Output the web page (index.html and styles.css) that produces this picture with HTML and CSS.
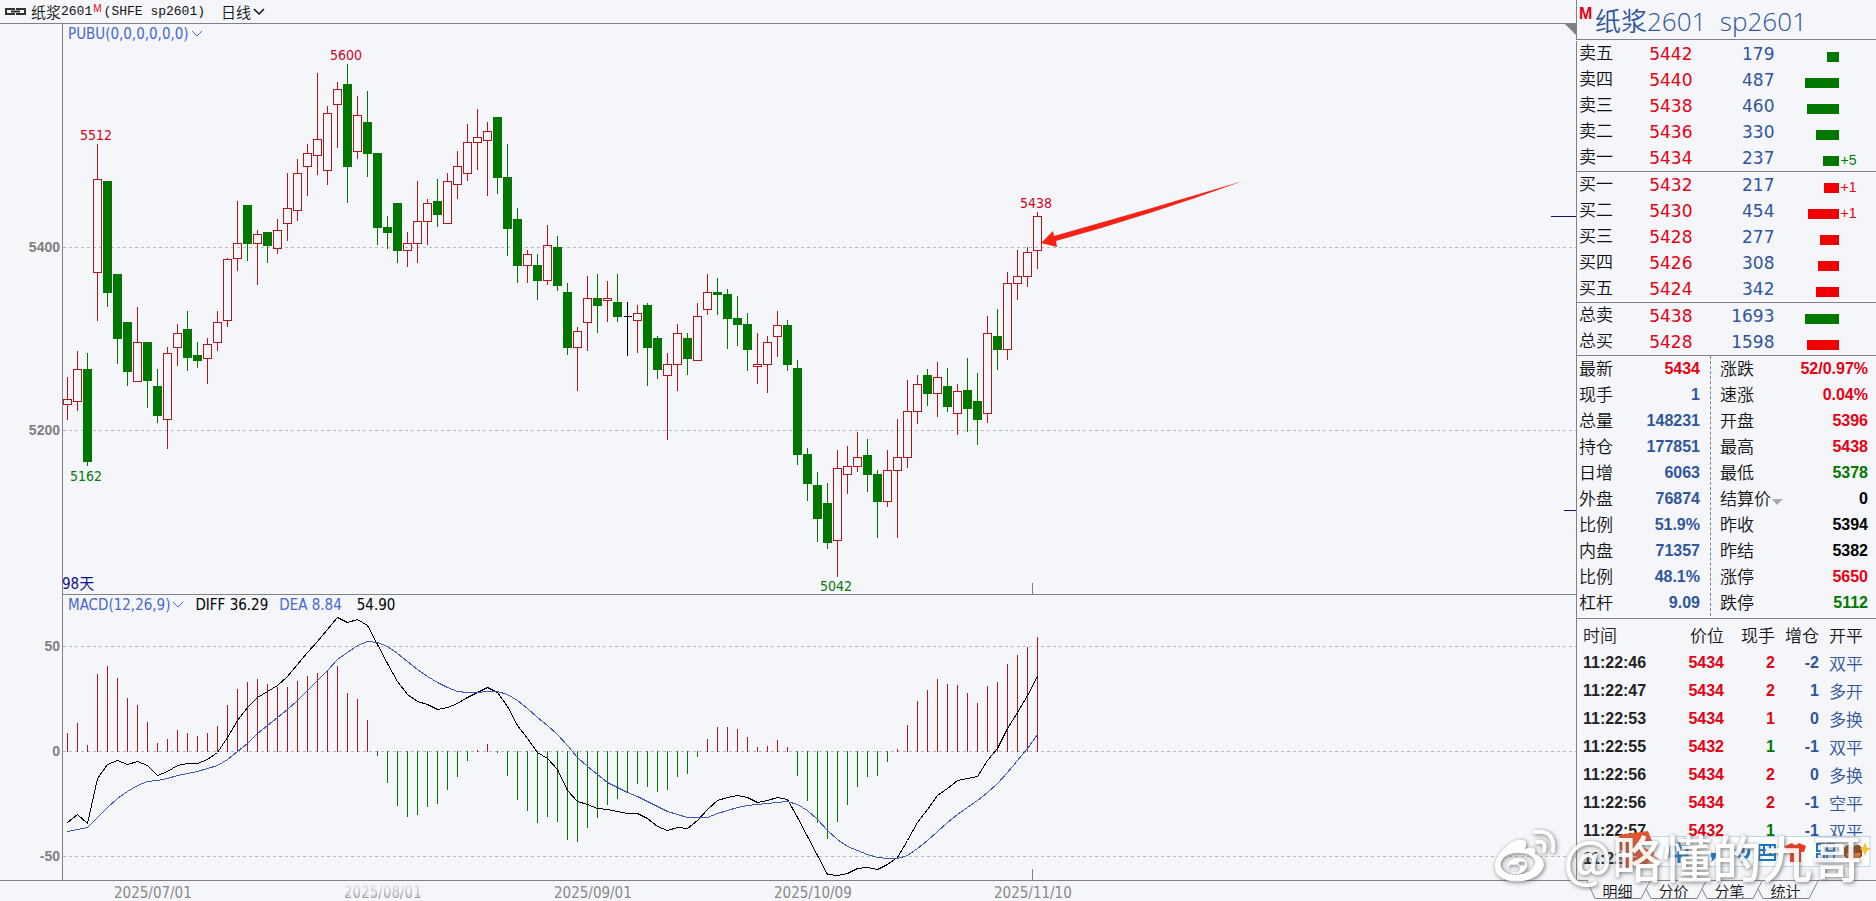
FILE: index.html
```html
<!DOCTYPE html>
<html lang="zh-CN">
<head>
<meta charset="utf-8">
<title>纸浆2601 日线</title>
<link rel="stylesheet" href="styles.css">
</head>
<body>
<div class="terminal">
  <main class="charts">
    <header class="toolbar">
      <svg class="link-icon" width="22" height="10" viewBox="0 0 22 10" aria-hidden="true"><path d="M9 3V2H1V7H9V6M12 3V2H20V7H12V6M6 4.500H15"/></svg>
      <h1 class="instrument">纸浆<span class="mono">2601</span><sup class="main-mark">M</sup><span class="mono">(SHFE sp2601)</span></h1>
      <button class="period" type="button">日线<svg class="chev" width="12" height="8" viewBox="0 0 12 8" aria-hidden="true"><path d="M1 1L6 6L11 1"/></svg></button>
    </header>
    <section class="pane" aria-label="K线">
      <div class="pane-head">
        <button class="indicator" type="button">PUBU(0,0,0,0,0,0)<svg class="chev" width="12" height="8" viewBox="0 0 12 8" aria-hidden="true"><path d="M1 1L6 6L11 1"/></svg></button>
      </div>
      <svg class="plot" id="price" viewBox="0 44 1576 551">
        <path class="grid" d="M63 247.500H1576M63 430.500H1576"/>
        <path class="frame" d="M62.500 44V594.500H1576M1032.500 583V594"/>
        <g id="candles"></g>
        <g class="axis"><text x="60" y="252">5400</text><text x="60" y="435">5200</text></g>
        <g class="peak up"><text x="96" y="140">5512</text><text x="346" y="60">5600</text><text x="1036" y="208">5438</text></g>
        <g class="peak down"><text x="86" y="481">5162</text><text x="836" y="591">5042</text></g>
        <text class="days" x="62" y="589">98天</text>
        <path class="level" d="M1551 216.500H1576M1564 510.500H1576"/>
        <path class="arrow" d="M1041 243L1053 231L1054 236Q1150 209 1243 181Q1150 215 1056 241L1057 247Z"/>
      </svg>
    </section>
    <section class="pane" aria-label="MACD">
      <div class="pane-head">
        <button class="indicator" type="button">MACD(12,26,9)<svg class="chev" width="12" height="8" viewBox="0 0 12 8" aria-hidden="true"><path d="M1 1L6 6L11 1"/></svg></button>
        <span>DIFF 36.29</span><span class="dea">DEA 8.84</span><span class="macd">54.90</span>
      </div>
      <svg class="plot" id="macd" viewBox="0 615 1576 266">
        <path class="grid" d="M63 646.500H1576M63 751.500H1576M63 856.500H1576"/>
        <path class="frame" d="M62.500 615V880.500M0 880.500H1576M1032.500 869V880"/>
        <g id="bars"></g>
        <polyline id="diff" class="line diff"/>
        <polyline id="signal" class="line signal"/>
        <g class="axis"><text x="60" y="651">50</text><text x="60" y="756">0</text><text x="60" y="861">-50</text></g>
      </svg>
    </section>
    <svg class="plot dates" viewBox="0 881 1576 20">
      <defs><linearGradient id="fade" x1="0" y1="0" x2="0" y2="1"><stop offset="0" stop-color="#ccc" stop-opacity=".2"/><stop offset="1" stop-color="#777"/></linearGradient></defs>
      <text x="114" y="898">2025/07/01</text>
      <text class="smear" x="344" y="898">2025/08/01</text>
      <text x="554" y="898">2025/09/01</text>
      <text x="774" y="898">2025/10/09</text>
      <text x="994" y="898">2025/11/10</text>
    </svg>
  </main>

  <aside class="panel">
    <svg class="corner" width="11" height="11" viewBox="0 0 11 11" aria-hidden="true"><path d="M0 0H11V11Z"/></svg>
    <h2 class="title"><span class="title-mark">M</span>纸浆2601&nbsp; sp2601</h2>

    <table class="book first">
      <colgroup><col class="c-name"><col class="c-price"><col class="c-vol"><col class="c-bar"><col></colgroup>
      <tbody class="ask">
        <tr><th scope="row">卖五</th><td>5442</td><td>179</td><td><i style="width:12px"></i></td><td></td></tr>
        <tr><th scope="row">卖四</th><td>5440</td><td>487</td><td><i style="width:34px"></i></td><td></td></tr>
        <tr><th scope="row">卖三</th><td>5438</td><td>460</td><td><i style="width:32px"></i></td><td></td></tr>
        <tr><th scope="row">卖二</th><td>5436</td><td>330</td><td><i style="width:23px"></i></td><td></td></tr>
        <tr><th scope="row">卖一</th><td>5434</td><td>237</td><td><i style="width:16px"></i></td><td>+5</td></tr>
      </tbody>
    </table>
    <table class="book">
      <colgroup><col class="c-name"><col class="c-price"><col class="c-vol"><col class="c-bar"><col></colgroup>
      <tbody class="bid">
        <tr><th scope="row">买一</th><td>5432</td><td>217</td><td><i style="width:15px"></i></td><td>+1</td></tr>
        <tr><th scope="row">买二</th><td>5430</td><td>454</td><td><i style="width:31px"></i></td><td>+1</td></tr>
        <tr><th scope="row">买三</th><td>5428</td><td>277</td><td><i style="width:19px"></i></td><td></td></tr>
        <tr><th scope="row">买四</th><td>5426</td><td>308</td><td><i style="width:21px"></i></td><td></td></tr>
        <tr><th scope="row">买五</th><td>5424</td><td>342</td><td><i style="width:23px"></i></td><td></td></tr>
      </tbody>
    </table>
    <table class="book">
      <colgroup><col class="c-name"><col class="c-price"><col class="c-vol"><col class="c-bar"><col></colgroup>
      <tbody class="ask"><tr><th scope="row">总卖</th><td>5438</td><td>1693</td><td><i style="width:34px"></i></td><td></td></tr></tbody>
      <tbody class="bid"><tr><th scope="row">总买</th><td>5428</td><td>1598</td><td><i style="width:32px"></i></td><td></td></tr></tbody>
    </table>

    <div class="quote">
      <dl class="stats left">
        <div><dt>最新</dt><dd class="r">5434</dd></div>
        <div><dt>现手</dt><dd>1</dd></div>
        <div><dt>总量</dt><dd>148231</dd></div>
        <div><dt>持仓</dt><dd>177851</dd></div>
        <div><dt>日增</dt><dd>6063</dd></div>
        <div><dt>外盘</dt><dd>76874</dd></div>
        <div><dt>比例</dt><dd>51.9%</dd></div>
        <div><dt>内盘</dt><dd>71357</dd></div>
        <div><dt>比例</dt><dd>48.1%</dd></div>
        <div><dt>杠杆</dt><dd>9.09</dd></div>
      </dl>
      <dl class="stats right">
        <div><dt>涨跌</dt><dd class="r">52/0.97%</dd></div>
        <div><dt>速涨</dt><dd class="r">0.04%</dd></div>
        <div><dt>开盘</dt><dd class="r">5396</dd></div>
        <div><dt>最高</dt><dd class="r">5438</dd></div>
        <div><dt>最低</dt><dd class="g">5378</dd></div>
        <div><dt>结算价<svg width="12" height="7" viewBox="0 0 12 7" aria-hidden="true"><path d="M1 1H12L6 7Z" fill="#aaa"/></svg></dt><dd class="k">0</dd></div>
        <div><dt>昨收</dt><dd class="k">5394</dd></div>
        <div><dt>昨结</dt><dd class="k">5382</dd></div>
        <div><dt>涨停</dt><dd class="r">5650</dd></div>
        <div><dt>跌停</dt><dd class="g">5112</dd></div>
      </dl>
    </div>

    <div class="ticks-box">
      <table class="ticks">
        <thead><tr><th class="t-time">时间</th><th class="t-price">价位</th><th class="t-hand">现手</th><th class="t-inc">增仓</th><th>开平</th></tr></thead>
        <tbody>
          <tr><td>11:22:46</td><td>5434</td><td class="r">2</td><td>-2</td><td>双平</td></tr>
          <tr><td>11:22:47</td><td>5434</td><td class="r">2</td><td>1</td><td>多开</td></tr>
          <tr><td>11:22:53</td><td>5434</td><td class="r">1</td><td>0</td><td>多换</td></tr>
          <tr><td>11:22:55</td><td>5432</td><td class="g">1</td><td>-1</td><td>双平</td></tr>
          <tr><td>11:22:56</td><td>5434</td><td class="r">2</td><td>0</td><td>多换</td></tr>
          <tr><td>11:22:56</td><td>5434</td><td class="r">2</td><td>-1</td><td>空平</td></tr>
          <tr><td>11:22:57</td><td>5432</td><td class="g">1</td><td>-1</td><td>双平</td></tr>
          <tr><td>11:22</td><td></td><td></td><td></td><td></td></tr>
        </tbody>
      </table>
    </div>

    <nav class="tabs">
      <button class="tab current" type="button"><svg width="64" height="19" viewBox="0 0 64 19" aria-hidden="true"><path d="M0 0L8 17.500H54L63 0"/></svg>明细</button>
      <button class="tab" type="button"><svg width="64" height="19" viewBox="0 0 64 19" aria-hidden="true"><path d="M3 8L8 17.500H54L63 0"/></svg>分价</button>
      <button class="tab" type="button"><svg width="64" height="19" viewBox="0 0 64 19" aria-hidden="true"><path d="M3 8L8 17.500H54L63 0"/></svg>分笔</button>
      <button class="tab" type="button"><svg width="64" height="19" viewBox="0 0 64 19" aria-hidden="true"><path d="M3 8L8 17.500H54L63 0"/></svg>统计</button>
    </nav>

    <svg class="ime" width="256" height="40" viewBox="0 0 256 40" aria-hidden="true">
      <rect x="18" y="6.500" width="237" height="30" fill="#fcfeff" stroke="#b9d8ee"/>
      <path d="M4 5L33 1L37 11L20 14L39 22L37 33L10 38L6 29L22 27L5 20Z" fill="#e8552e"/>
      <path d="M36 24L44 29L33 34Z" fill="#f3a184"/>
      <g fill="none" stroke="#1878c8" stroke-width="3"><path d="M56 17H72V26H56ZM64 12V33"/><path d="M128 13V23M122 19Q122 28 128 28Q134 28 134 19M128 28V33"/></g>
      <path d="M96 23H101Q102 29 96 32Q98 28 96 27Z" fill="#1878c8"/>
      <g fill="none" stroke="#1878c8" stroke-width="2"><rect x="144" y="15" width="16" height="15"/><path d="M144 20H160M144 25H160M149 15V25M155 15V25"/></g>
      <path d="M170 16L177 13Q180 17 184 13L191 16L189 22H186V32H175V22H172Z" fill="#f03a20"/>
      <path d="M202 14H209V21H202ZM212 14H219V21H212ZM202 24H209V31H202ZM212 24H219V31H212Z" fill="#fff" stroke="#1878c8" stroke-width="2"/>
      <path d="M229 18Q234 12 238 17Q243 12 247 18V26Q238 35 229 26Z" fill="#8a4a22"/><path d="M231 23H246Q244 30 238 30Q233 30 231 23Z" fill="#e87830"/>
      <path d="M250 12L252 17L256 19L252 21L250 26L248 21L245 19L248 17Z" fill="#f5c33b"/>
    </svg>
    <div class="watermark">
      <svg width="66" height="56" viewBox="0 0 66 56" aria-hidden="true">
        <g fill="none" stroke="#fff" stroke-width="4" stroke-linecap="round"><path d="M43 4Q64 2 61 23"/><path d="M45 14Q55 12 52 23"/></g>
        <path fill="#fff" fill-rule="evenodd" d="M30 12C35 12 35 16 33 21C39 18 45 19 43 26C52 29 55 38 48 45C39 55 14 57 5 46C-2 35 9 20 22 13Q27 11 30 12ZM26 25C14 25 7 32 9 39C12 48 28 49 38 43C50 33 39 24 26 25ZM26 30C36 29 38 40 31 44C21 50 12 42 16 35Q19 30 26 30ZM22 37A4 4 0 1 0 22 44A4 4 0 1 0 22 37ZM30 34A2 2 0 1 0 30 37A2 2 0 1 0 30 34Z"/>
      </svg>
      <span>@略懂的九哥</span>
    </div>
  </aside>
</div>
<script src="chart.js"></script>
</body>
</html>
```
FILE: styles.css
```css
:root {
  --bg: #f5f6fa;
  --line: #808088;
  --red: #e60012;
  --green: #007800;
  --blue: #30559c;
  --indicator: #4766cf;
  --narrow: "DejaVu Sans Condensed", "Noto Sans", "Noto Sans CJK SC", sans-serif;
  --cjk: "Noto Sans CJK SC", sans-serif;
  --bold: "Liberation Sans", "Noto Sans CJK SC", sans-serif;
}
* { box-sizing: border-box; }
body { margin: 0; background: var(--bg); color: #111; font-family: var(--cjk); }
button { margin: 0; padding: 0; border: 0; background: none; color: inherit; font: inherit; cursor: pointer; }
table { width: 100%; border-collapse: collapse; table-layout: fixed; }
th, td { padding: 0; font-weight: 400; }
.terminal { display: grid; grid-template-columns: minmax(0, 1fr) 300px; min-height: 100vh; overflow: hidden; }

.charts { display: flex; flex-direction: column; }
.toolbar { display: flex; align-items: center; height: 24px; padding-left: 5px; border-bottom: 1px solid var(--line); }
.link-icon { fill: none; stroke: #333; stroke-width: 2; }
.instrument { display: flex; align-items: center; margin: 0 0 0 4px; font-size: 15px; line-height: 23px; font-weight: 350; }
.mono { font-family: "Liberation Mono", monospace; font-size: 13px; white-space: pre; }
.main-mark { margin: 0 2px 6px 1px; color: var(--red); font: 10px/12px "Liberation Sans", sans-serif; }
.period { display: flex; align-items: center; gap: 2px; margin-left: 16px; font-size: 15px; font-weight: 350; }
.chev { fill: none; stroke: currentColor; stroke-width: 1; }
.toolbar .chev { stroke-width: 1.5; }

.pane { display: flex; flex-direction: column; }
.pane-head { display: flex; align-items: center; height: 20px; margin-left: 62px; padding-left: 5px; border-left: 1px solid var(--line); color: #000; font: 15px/20px var(--narrow); }
.indicator { display: flex; align-items: center; gap: 2px; margin-right: 11px; color: var(--indicator); }
.dea { margin-left: 11px; color: var(--indicator); }
.macd { margin-left: 15px; }
.plot { display: block; width: 100%; height: auto; font: 14px var(--narrow); }
.plot path, .plot line { shape-rendering: crispEdges; }
.plot .arrow { fill: #f52216; shape-rendering: auto; }
.grid { stroke: #b9bac0; stroke-dasharray: 3 3; }
.frame { fill: none; stroke: var(--line); }
.level { stroke: #101070; }
.axis { fill: #808080; font: bold 14px "Liberation Sans", sans-serif; text-anchor: end; }
.peak { text-anchor: middle; }
.peak.up { fill: #d0021b; }
.peak.down { fill: #087808; }
.days { fill: #10108c; font-size: 15px; }
.rise { fill: none; stroke: #b8141e; }
.fall { fill: var(--green); stroke: var(--green); }
.flat { stroke: #000; }
.line { fill: none; stroke-width: 1; shape-rendering: crispEdges; }
.diff { stroke: #000; }
.signal { stroke: #3f58bd; }
.dates { fill: #888; font-size: 15px; }
.smear { fill: url(#fade); filter: drop-shadow(0 -2px 0 #d0d0d4); }

.panel { position: relative; display: flex; flex-direction: column; }
.panel > *:not(svg):not(.tabs):not(.watermark) { border-left: 1px solid var(--line); }
.corner { position: absolute; left: -11px; top: 24px; fill: var(--line); }
.title { display: flex; height: 40px; margin: 0; padding-left: 2px; border-bottom: 1px solid var(--line); color: var(--blue); font: 350 26px/42px "Open Sans", "Noto Sans CJK SC", sans-serif; }
.title-mark { width: 16px; color: var(--red); font: bold 16px/28px var(--bold); }
.book { border-bottom: 1px solid var(--line); }
.book.first { border-top: 1px solid var(--bg); }
.book tr { height: 26px; }
.c-name { width: 50px; }
.c-price { width: 66px; }
.c-vol { width: 82px; }
.c-bar { width: 64px; }
.book th { padding: 0 0 4px 2px; text-align: left; font-size: 17px; line-height: 22px; font-weight: 350; }
.book td { text-align: right; font: 17px/26px "DejaVu Sans", sans-serif; }
.book td:nth-child(2) { color: var(--red); }
.book td:nth-child(3) { color: var(--blue); }
.book td:nth-child(4) { padding-top: 5px; line-height: 0; }
.book i { display: inline-block; height: 10px; vertical-align: middle; }
.book td:last-child { padding: 4px 0 0 2px; text-align: left; font: 14px/22px var(--bold); }
.ask i { background: var(--green); }
.bid i { background: #f00000; }
.ask td:last-child { color: var(--green); }
.bid td:last-child { color: var(--red); }

.quote { display: grid; grid-template-columns: 134px 1fr; padding-bottom: 2px; border-bottom: 1px solid var(--line); }
.stats { margin: 0; }
.stats div { display: flex; justify-content: space-between; height: 26px; line-height: 24px; }
.stats dt { font-size: 17px; font-weight: 350; }
.stats dd { margin: 0; color: var(--blue); font: bold 16px/26px var(--bold); }
.left { padding: 0 10px 0 2px; border-right: 1px dashed var(--line); }
.right { padding: 0 8px 0 9px; }
.stats .r, .ticks .r { color: var(--red); }
.stats .g, .ticks .g { color: var(--green); }
.stats .k { color: #000; }

.ticks-box { flex: 1 1 auto; padding-top: 2px; }
.ticks tr { height: 28px; }
.ticks th { font-size: 17px; line-height: 28px; font-weight: 350; text-align: right; }
.ticks td { color: var(--blue); font: bold 16px/28px var(--bold); text-align: right; }
.t-time { width: 80px; }
.t-price { width: 67px; }
.t-hand { width: 51px; }
.t-inc { width: 44px; }
.ticks th:first-child, .ticks td:first-child { padding-left: 6px; color: #222; text-align: left; }
.ticks td:nth-child(2) { color: var(--red); }
.ticks th:last-child, .ticks td:last-child { padding-left: 10px; text-align: left; }
.ticks td:last-child { font: 350 17px/28px var(--cjk); }

.tabs { display: flex; height: 21px; padding-left: 11px; border-top: 1px solid var(--line); }
.tab { position: relative; width: 56px; height: 19px; padding-left: 5px; font-size: 15px; line-height: 17px; font-weight: 350; }
.tab svg { position: absolute; left: 0; top: 0; fill: none; stroke: var(--line); }
.tab.current::before { content: ""; position: absolute; left: 1px; top: -1px; width: 62px; height: 1px; background: var(--bg); }

.ime { position: absolute; right: 5px; bottom: 31px; }
.watermark { position: absolute; right: 14px; bottom: 17px; display: flex; align-items: center; gap: 5px; color: #fff; opacity: .9; font: 500 50px/56px var(--cjk); white-space: nowrap; filter: drop-shadow(1px 1px 2px #666); pointer-events: none; }
.watermark svg { flex: none; }
```
FILE: chart.js
```js
// Each candle: kind (r rise, g fall, k flat), high, body top, body bottom, low.
const candles = `r377,399,404,419 r351,369,401,410 g353,369,462,465 r144,179,272,320 g181,181,293,306 g274,274,339,363 g322,322,372,385 r307,342,381,381 g342,342,381,407 g369,386,416,422
r347,353,419,448 r324,333,347,365 g311,329,358,370 g342,355,361,367 r338,344,358,383 r311,322,342,350 r258,259,320,326 r201,243,258,270 g205,205,244,260 r230,234,243,284
g232,232,246,262 r219,230,248,253 r173,208,223,240 r159,173,210,220 r144,153,166,195 r73,139,155,174 r106,113,170,184 r82,89,104,147 g64,84,167,202 r96,115,151,158
g91,122,154,176 g153,153,228,244 g216,227,233,248 g203,203,251,262 r232,243,250,266 r181,221,243,262 r199,203,221,244 g179,201,215,226 r173,181,223,223 r151,166,184,198
r124,142,173,180 r109,137,142,169 r122,131,140,195 g117,117,178,193 g144,177,229,255 g208,219,266,282 r250,254,265,282 g254,265,281,299 r225,245,280,284 g236,247,286,290
g283,292,348,354 r327,331,347,390 r276,298,322,350 g274,298,306,332 r281,298,300,321 g274,302,317,321 k302,316,316,356 r305,313,320,352 g303,305,348,385 g336,338,370,378
r353,364,375,439 r324,333,364,390 g333,338,359,374 r303,316,360,360 r274,292,309,314 g278,292,295,314 g289,294,319,348 g296,318,325,345 g313,324,350,370 r333,364,366,383
r336,342,364,392 r311,325,336,356 g320,325,365,370 g360,368,455,464 g448,454,484,500 g472,485,519,541 g483,503,543,548 r450,468,540,576 r446,466,474,493 r432,457,466,471
g439,455,475,491 g470,474,502,537 r450,470,501,506 r419,457,470,537 r380,411,457,467 r375,384,411,423 g369,375,394,405 r362,377,393,416 g368,386,407,411 r384,391,413,434
g358,390,409,431 g373,401,420,444 r316,333,413,422 g309,336,350,369 r272,283,349,359 r250,276,283,299 r247,252,276,286 r212,216,250,268`.split(/\s+/);

const bars = [733,723,745,674,666,678,698,705,722,743,739,730,733,736,733,726,705,689,682,679,684,687,687,681,676,673,671,666,693,699,720,756,783,806,817,815,807,804,790,777,761,750,744,753,776,800,811,823,817,822,840,842,828,818,805,799,792,784,787,792,790,777,774,757,739,727,727,729,737,747,746,740,747,776,801,823,839,822,805,787,777,776,762,749,725,701,690,679,684,685,693,703,686,682,664,655,647,637];
const diff = [822,814,823,778,764,760,764,761,765,775,771,765,763,763,759,752,737,720,707,697,691,685,676,664,652,641,629,617,622,619,625,644,663,681,694,701,704,709,707,703,697,692,687,692,706,725,738,752,758,769,790,801,804,808,809,811,813,813,818,826,830,827,828,820,809,800,797,795,797,802,800,797,799,817,836,855,874,875,873,868,867,869,864,857,840,822,809,795,788,780,778,776,760,748,728,712,695,676];
const signal = [831,829,827,817,807,798,791,785,781,780,778,775,773,771,768,765,759,751,743,733,725,717,709,700,690,680,670,659,652,645,641,642,646,653,661,669,676,682,687,691,692,692,691,691,694,700,708,717,725,734,745,757,766,774,782,787,792,796,801,806,811,814,817,817,817,813,810,807,805,804,803,802,801,804,810,819,830,839,846,850,854,857,858,858,855,848,840,831,822,814,807,800,792,783,772,760,748,734];

const zero = 751;
const x = i => 67.5 + i * 10;
const kinds = { r: 'rise', g: 'fall', k: 'flat' };

document.getElementById('candles').innerHTML = candles.map((c, i) => {
  const [high, top, bottom, low] = c.slice(1).split(',').map(Number);
  const cx = x(i);
  const wick = c[0] === 'k'
    ? `M${cx} ${high}V${low}`
    : `M${cx} ${high}V${top}M${cx} ${bottom}V${low + 0.5}`;
  const end = c[0] === 'g' ? bottom - 0.5 : bottom + 0.5;
  const body = `M${cx - 4} ${top + 0.5}H${cx + 4}V${end}H${cx - 4}Z`;
  return `<path class="${kinds[c[0]]}" d="${wick}${body}"/>`;
}).join('');

document.getElementById('bars').innerHTML = bars.map((y, i) =>
  `<path class="${y < zero ? 'rise' : 'fall'}" d="M${x(i)} ${y}V${zero + (y < zero ? 1 : 0)}"/>`
).join('');

const points = data => data.map((y, i) => `${x(i)},${y + 0.5}`).join(' ');
document.getElementById('diff').setAttribute('points', points(diff));
document.getElementById('signal').setAttribute('points', points(signal));
```
